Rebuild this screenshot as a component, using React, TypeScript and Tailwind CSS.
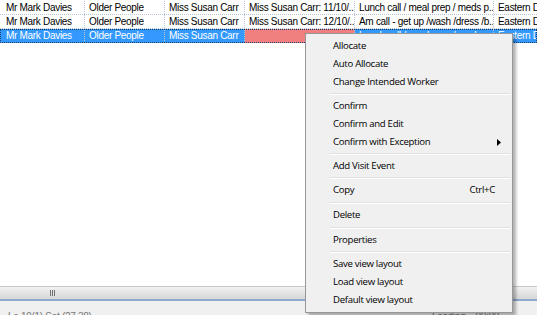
import React from "react";

type Row = {
  cells: string[];
  selected?: boolean;
};

const cols = [83, 80, 80, 110, 139, 60];

const rows: Row[] = [
  {
    cells: [
      "Mr Mark Davies",
      "Older People",
      "Miss Susan Carr",
      "Miss Susan Carr: 11/10/...",
      "Lunch call / meal prep / meds p...",
      "Eastern District",
    ],
  },
  {
    cells: [
      "Mr Mark Davies",
      "Older People",
      "Miss Susan Carr",
      "Miss Susan Carr: 12/10/...",
      "Am call - get up /wash /dress /b...",
      "Eastern District",
    ],
  },
  {
    cells: [
      "Mr Mark Davies",
      "Older People",
      "Miss Susan Carr",
      "",
      "Lunch call / meal prep / meds p...",
      "Eastern District",
    ],
    selected: true,
  },
];

type MenuEntry =
  | { label: string; shortcut?: string; sub?: boolean }
  | { sep: number };

const menu: MenuEntry[] = [
  { label: "Allocate" },
  { label: "Auto Allocate" },
  { label: "Change Intended Worker" },
  { sep: 6 },
  { label: "Confirm" },
  { label: "Confirm and Edit" },
  { label: "Confirm with Exception", sub: true },
  { sep: 6 },
  { label: "Add Visit Event" },
  { sep: 6 },
  { label: "Copy", shortcut: "Ctrl+C" },
  { sep: 7 },
  { label: "Delete" },
  { sep: 7 },
  { label: "Properties" },
  { sep: 6 },
  { label: "Save view layout" },
  { label: "Load view layout" },
  { label: "Default view layout" },
];

function GridRow({ row }: { row: Row }) {
  return (
    <div
      className={
        "flex h-[14px] shrink-0 " +
        (row.selected
          ? "bg-[#3399ff] text-white outline-1 outline-dotted outline-offset-[-1px] outline-[#1f3f66]"
          : "bg-white text-black border-b border-dotted border-[#b9c4d6]")
      }
    >
      <div className="w-[2px] shrink-0" />
      {row.cells.map((c, i) => (
        <div
          key={i}
          style={{ width: cols[i] }}
          className={
            "shrink-0 overflow-hidden whitespace-nowrap pl-[4px] leading-[13px] " +
            (i < cols.length - 1 ? "border-r border-dotted border-[#b9c4d6] " : "") +
            (row.selected && i === 3 ? "bg-[#f08080]" : "")
          }
        >
          {c}
        </div>
      ))}
    </div>
  );
}

function ContextMenu() {
  return (
    <div className="absolute left-[305px] top-[33px] w-[208px] border border-[#979797] bg-[#f0f0f0] py-[3px] shadow-[3px_3px_3px_rgba(0,0,0,0.3)] font-['Open_Sans','Noto_Sans',sans-serif] text-[9.6px] text-black">
      {menu.map((m, i) =>
        "sep" in m ? (
          <div key={i} style={{ height: m.sep }} className="flex items-center pl-[24px] pr-[2px]">
            <div className="h-[2px] w-full border-t border-[#e0e0e0] border-b-white border-b" />
          </div>
        ) : (
          <div key={i} className="flex h-[18px] items-center pl-[27px] pr-[17px]">
            <span className="flex-1 leading-none">{m.label}</span>
            {m.shortcut && <span className="leading-none">{m.shortcut}</span>}
            {m.sub && (
              <svg width="4" height="7" viewBox="0 0 4 7" className="mr-[-6px]">
                <path d="M0 0 L4 3.5 L0 7 Z" fill="#000" />
              </svg>
            )}
          </div>
        )
      )}
    </div>
  );
}

export default function App() {
  return (
    <div className="relative h-[315px] w-[537px] overflow-hidden bg-white font-['Liberation_Sans',Arial,sans-serif] text-[10px] tracking-[-0.3px]">
      <div className="flex h-full flex-col">
        <div className="mt-[1px] flex flex-col">
          {rows.map((r, i) => (
            <GridRow key={i} row={r} />
          ))}
        </div>
        <div className="flex-1 bg-white" />
        <div className="relative h-[13px] shrink-0 border-t border-[#c8c8c8] bg-gradient-to-b from-[#f2f2f2] to-[#d6d6d6]">
          <div className="absolute left-[50px] top-[3px] flex gap-[1px]">
            <div className="h-[6px] w-[1px] bg-[#707070]" />
            <div className="h-[6px] w-[1px] bg-[#707070]" />
            <div className="h-[6px] w-[1px] bg-[#707070]" />
          </div>
        </div>
        <div className="h-[2px] shrink-0 bg-[#8ea8cf]" />
        <div className="h-[14px] shrink-0 bg-[#f0f0f0] px-[8px] pt-[11px] text-[10px] leading-none text-[#777]">
          <div className="flex justify-between">
            <span>Le 19(1) Sat (27,38)</span>
            <span className="mr-[30px]">Loading... 00:00</span>
          </div>
        </div>
      </div>
      <ContextMenu />
    </div>
  );
}
